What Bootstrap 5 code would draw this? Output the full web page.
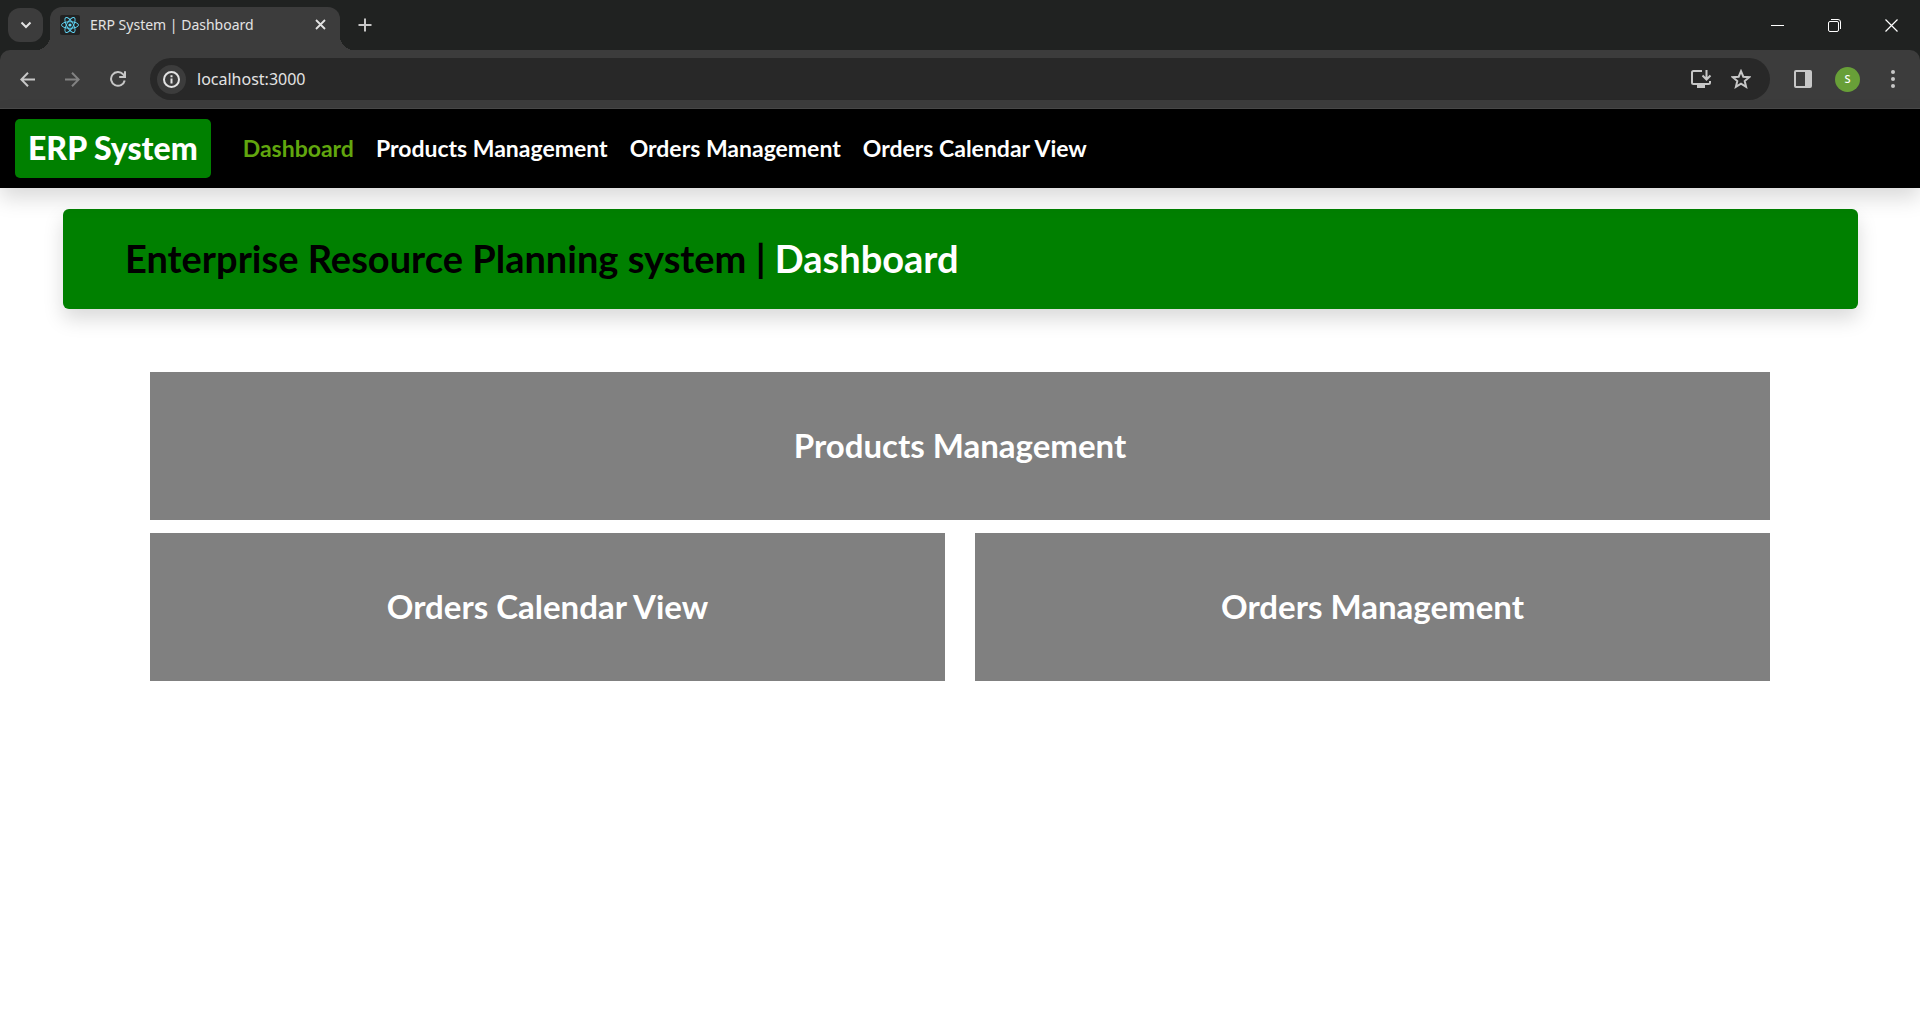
<!DOCTYPE html>
<html lang="en">
<head>
<meta charset="utf-8">
<meta name="viewport" content="width=device-width, initial-scale=1">
<title>ERP System | Dashboard</title>
<link href="https://cdn.jsdelivr.net/npm/bootstrap@5.3.0/dist/css/bootstrap.min.css" rel="stylesheet">
<style>
  body { font-family: Lato, "Liberation Sans", sans-serif; background: #fff; }
  svg { display: block; flex: none; }

  /* browser window */
  .chrome-ui { font-family: "Noto Sans", "Open Sans", sans-serif; background: #202221; }
  .chrome-ui button { border: 0; padding: 0; background: none; color: #c7c7c7; display: flex; align-items: center; justify-content: center; flex: none; }
  .tab-strip { height: 50px; padding-left: 8px; }
  .chrome-ui .tab-search { width: 35px; height: 34px; border-radius: 12px; background: #3c3c3c; color: #e3e3e3; }
  .browser-tab { position: relative; width: 290px; height: 43px; margin-left: 7px; padding: 0 8px 8px 10px; gap: 10px; background: #3c3c3c; border-radius: 12px 12px 0 0; color: #e3e3e3; font-size: 14px; line-height: 20px; }
  .browser-tab::before, .browser-tab::after { content: ""; position: absolute; bottom: 0; width: 14px; height: 14px; }
  .browser-tab::before { right: 100%; background: radial-gradient(circle at 0 0, transparent 14px, #3c3c3c 14px); }
  .browser-tab::after { left: 100%; background: radial-gradient(circle at 100% 0, transparent 14px, #3c3c3c 14px); }
  .chrome-ui .tab-close { width: 24px; height: 24px; color: #e3e3e3; }
  .chrome-ui .tab-new { width: 34px; height: 34px; margin-left: 8px; }
  .chrome-ui .win-btn { width: 57px; height: 50px; color: #fff; }
  .tool-bar { height: 59px; padding: 0 10px; gap: 15px; background: #3c3c3c; border-bottom: 1px solid #4a4a4a; border-radius: 10px 10px 0 0; }
  .tool-group { display: flex; align-items: center; gap: 10px; }
  .tool-group-end { gap: 15px; }
  .chrome-ui .tool-btn { width: 35px; height: 36px; }
  .tool-btn:disabled { opacity: .5; }
  .omnibox { height: 42px; border-radius: 21px; background: #282828; padding: 0 12px 0 7px; gap: 5px; }
  .chrome-ui .site-info { width: 29px; height: 29px; border-radius: 50%; background: #3c3c3c; color: #e3e3e3; }
  .omnibox input { border: 0; outline: 0; background: none; color: #e3e3e3; font-size: 16px; line-height: 24px; padding: 0 0 0 6px; min-width: 0; }
  .chrome-ui .profile-btn { width: 25px; height: 25px; border-radius: 50%; background: #689f38; color: #fff; font-size: 11px; line-height: 12px; font-weight: 500; }

  /* application */
  .app-nav { background: #000; padding: 10px 15px; gap: 24px; }
  .app-nav .navbar-brand { background: green; color: #fff; border-radius: 5px; padding: 9px 13px 11px; margin: 0; font-size: 32px; line-height: 39px; font-weight: 900; }
  .app-nav .navbar-nav { gap: 6px; }
  .app-nav .nav-link { color: #fff; font-size: 23px; line-height: 36px; font-weight: 700; padding: 0 8px 2px; white-space: nowrap; }
  .app-nav .nav-link.active { color: #61a60e; }
  .drop-shade { box-shadow: 0 10px 20px rgba(0, 0, 0, .15); }
  .page-banner { background: green; border-radius: 6px; margin: 21px 62px 63px 63px; padding: 24px 62px 26px; }
  .page-banner h1 { margin: 0; color: #000; font-size: 38px; line-height: 50px; font-weight: 700; }
  .page-banner span { color: #fff; }
  .tile-grid { max-width: 1650px; padding: 0 15px; }
  .tile-grid .row { --bs-gutter-x: 30px; --bs-gutter-y: 13px; }
  .tile-link { display: flex; align-items: center; justify-content: center; height: 148px; padding-bottom: 2px; background: gray; color: #fff; text-decoration: none; }
  .tile-link h2 { margin: 0; font-size: 33px; line-height: 40px; font-weight: 700; }
</style>
</head>
<body>
<header class="chrome-ui">
  <div class="tab-strip d-flex align-items-center">
    <button class="tab-search" aria-label="Search tabs"><svg width="12" height="8" viewBox="0 0 12 8" fill="none" stroke="currentColor" stroke-width="2"><path d="M1.500 1.500 6 6l4.500-4.500"/></svg></button>
    <div class="browser-tab d-flex align-items-center align-self-end">
      <svg width="20" height="20" viewBox="0 0 20 20"><rect width="20" height="20" rx="2" fill="#222"/><g fill="none" stroke="#61dafb" stroke-width=".9"><ellipse cx="10" cy="10" rx="8.500" ry="3.300"/><ellipse cx="10" cy="10" rx="8.500" ry="3.300" transform="rotate(60 10 10)"/><ellipse cx="10" cy="10" rx="8.500" ry="3.300" transform="rotate(120 10 10)"/></g><circle cx="10" cy="10" r="1.600" fill="#61dafb"/></svg>
      <span class="flex-grow-1 text-nowrap">ERP System | Dashboard</span>
      <button class="tab-close" aria-label="Close tab"><svg width="11" height="11" viewBox="0 0 11 11" stroke="currentColor" stroke-width="1.800"><path d="m1 1 9 9M10 1l-9 9"/></svg></button>
    </div>
    <button class="tab-new" aria-label="New tab"><svg width="14" height="14" viewBox="0 0 14 14" stroke="currentColor" stroke-width="2"><path d="M7 .5v13M.5 7h13"/></svg></button>
    <div class="d-flex ms-auto">
      <button class="win-btn" aria-label="Minimize"><svg width="13" height="13" viewBox="0 0 13 13" stroke="currentColor"><path d="M0 6.500h13"/></svg></button>
      <button class="win-btn" aria-label="Restore"><svg width="13" height="13" viewBox="0 0 13 13" fill="none" stroke="currentColor"><rect x=".5" y="2.500" width="10" height="10" rx="1.500"/><path d="M3 .5h7a2.500 2.500 0 0 1 2.500 2.500v7"/></svg></button>
      <button class="win-btn" aria-label="Close"><svg width="13" height="13" viewBox="0 0 13 13" stroke="currentColor" stroke-width="1.200"><path d="m.5.5 12 12M12.500.5l-12 12"/></svg></button>
    </div>
  </div>
  <div class="tool-bar d-flex align-items-center">
    <div class="tool-group">
      <button class="tool-btn" aria-label="Back"><svg width="15" height="15" viewBox="0 0 15 15" fill="none" stroke="currentColor" stroke-width="2"><path d="M15 7.500H1.500M8 .8 1.300 7.500 8 14.200"/></svg></button>
      <button class="tool-btn" aria-label="Forward" disabled><svg width="15" height="15" viewBox="0 0 15 15" fill="none" stroke="currentColor" stroke-width="2"><path d="M0 7.500h13.500M7 .8l6.700 6.700L7 14.200"/></svg></button>
      <button class="tool-btn" aria-label="Reload"><svg width="16" height="16" viewBox="0 0 16 16" fill="none" stroke="currentColor" stroke-width="2"><path d="M14.700 9.500A6.900 6.900 0 1 1 13.200 3.400L15 5.500M15 .2V6H9.200"/></svg></button>
    </div>
    <div class="omnibox d-flex align-items-center flex-grow-1">
      <button class="site-info" aria-label="Site information"><svg width="17" height="17" viewBox="0 0 17 17" fill="none" stroke="currentColor" stroke-width="2"><circle cx="8.500" cy="8.500" r="7.500"/><path d="M8.500 7.500v5M8.500 4.300v2"/></svg></button>
      <input class="flex-grow-1" type="text" aria-label="Address" value="localhost:3000">
      <button class="tool-btn" aria-label="Install app"><svg width="22" height="20" viewBox="0 0 22 20" fill="none" stroke="currentColor" stroke-width="2"><path d="M12 2H3.500A1.500 1.500 0 0 0 2 3.500v10A1.500 1.500 0 0 0 3.500 15h15a1.500 1.500 0 0 0 1.500-1.500V12M16.500 1v9M12.500 6.500l4 4 4-4"/><path d="M7 17.500h8" stroke-width="3"/></svg></button>
      <button class="tool-btn" aria-label="Bookmark"><svg width="20" height="20" viewBox="0 0 20 20" fill="none" stroke="currentColor" stroke-width="2"><path d="m10 2.200 2.300 5.500 5.900.5-4.500 3.900 1.400 5.700-5.100-3.100-5.100 3.100 1.400-5.700-4.500-3.900 5.900-.5z"/></svg></button>
    </div>
    <div class="tool-group tool-group-end">
      <button class="tool-btn" aria-label="Side panel"><svg width="18" height="18" viewBox="0 0 18 18"><rect x="1" y="1" width="16" height="16" rx="1" fill="none" stroke="currentColor" stroke-width="2"/><path d="M11 1h6v16h-6z" fill="currentColor"/></svg></button>
      <button class="profile-btn" aria-label="Profile">S</button>
      <button class="tool-btn" aria-label="Menu"><svg width="4" height="18" viewBox="0 0 4 18" fill="currentColor"><circle cx="2" cy="2" r="2"/><circle cx="2" cy="9" r="2"/><circle cx="2" cy="16" r="2"/></svg></button>
    </div>
  </div>
</header>

<nav class="app-nav navbar navbar-expand justify-content-start drop-shade">
  <a class="navbar-brand" href="#">ERP System</a>
  <div class="navbar-nav">
    <a class="nav-link active" aria-current="page" href="#">Dashboard</a>
    <a class="nav-link" href="#products">Products Management</a>
    <a class="nav-link" href="#orders">Orders Management</a>
    <a class="nav-link" href="#calendar">Orders Calendar View</a>
  </div>
</nav>

<main>
  <div class="page-banner drop-shade">
    <h1>Enterprise Resource Planning system | <span>Dashboard</span></h1>
  </div>
  <div class="tile-grid container-fluid">
    <div class="row">
      <div class="col-12"><a class="tile-link" href="#products"><h2>Products Management</h2></a></div>
      <div class="col-6"><a class="tile-link" href="#calendar"><h2>Orders Calendar View</h2></a></div>
      <div class="col-6"><a class="tile-link" href="#orders"><h2>Orders Management</h2></a></div>
    </div>
  </div>
</main>
<script src="https://cdn.jsdelivr.net/npm/bootstrap@5.3.0/dist/js/bootstrap.bundle.min.js"></script>
</body>
</html>
